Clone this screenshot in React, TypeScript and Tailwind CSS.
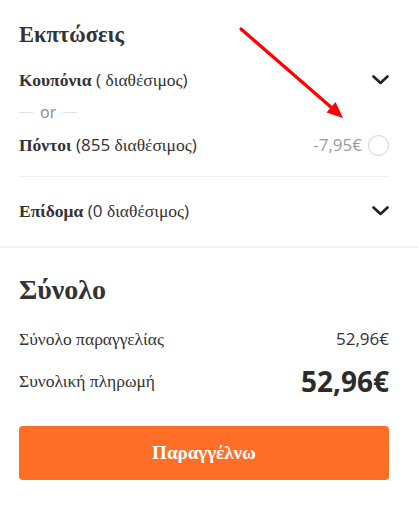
import React from 'react';

const serif = "font-['Liberation_Serif',serif]";
const sans = "font-['Open_Sans',sans-serif]";

// 결제 요약 패널의 접기 화살표
const Chevron = () => (
  <svg width="17" height="10" viewBox="0 0 17 10" fill="none">
    <polyline points="1.5,1.5 8.5,8 15.5,1.5" stroke="#222" strokeWidth="2.6" strokeLinecap="round" strokeLinejoin="round" />
  </svg>
);

const Available = ({ count }: { count?: string }) => (
  <span className="text-[#333]">
    <span className={`${sans} text-[17px]`}>(</span>
    {count ? <span className={`${sans} text-[17px]`}>{count}</span> : null}
    <span className={serif}> διαθέσιμος</span>
    <span className={`${sans} text-[17px]`}>)</span>
  </span>
);

const App: React.FC = () => {
  return (
    <div className="relative w-[418px] h-[510px] bg-white overflow-hidden text-[#333]">
      {/* 할인 섹션 */}
      <div className="pl-[19px] pr-[29px] pt-[20px]">
        <h2 className={`${serif} font-bold text-[22.5px] leading-[30px] text-[#333]`}>Εκπτώσεις</h2>

        <div className="mt-[15px] h-[30px] flex items-center justify-between text-[17.5px]">
          <div>
            <span className={`${serif} font-bold`}>Κουπόνια</span> <Available />
          </div>
          <Chevron />
        </div>

        <div className="mt-[5px] h-[24px] flex items-center gap-[7px]">
          <span className="w-[14px] h-px bg-[#e3e3e3]" />
          <span className={`${sans} text-[16px] text-[#8a8a8a] leading-none`}>or</span>
          <span className="w-[14px] h-px bg-[#e3e3e3]" />
        </div>

        <div className="mt-[6px] h-[30px] flex items-center justify-between text-[17.5px]">
          <div>
            <span className={`${serif} font-bold`}>Πόντοι</span> <Available count="855" />
          </div>
          <div className="flex items-center gap-[6px]">
            <span className={`${sans} text-[17px] text-[#9a9a9a]`}>-7,95€</span>
            <span className="w-[21px] h-[21px] rounded-full border border-[#cfcfcf]" />
          </div>
        </div>

        <div className="mt-[16px] h-px bg-[#f0f0f0]" />

        <div className="mt-[19px] h-[30px] flex items-center justify-between text-[17.5px]">
          <div>
            <span className={`${serif} font-bold`}>Επίδομα</span> <Available count="0" />
          </div>
          <Chevron />
        </div>
      </div>

      <div className="mt-[20px] h-[2px] bg-[#f2f2f2]" />

      {/* 합계 섹션 */}
      <div className="pl-[19px] pr-[29px]">
        <h2 className={`${serif} font-bold text-[28px] leading-[34px] mt-[25px] text-[#333]`}>Σύνολο</h2>

        <div className="mt-[17px] h-[30px] flex items-center justify-between">
          <span className={`${serif} text-[17.5px]`}>Σύνολο παραγγελίας</span>
          <span className={`${sans} text-[17px]`}>52,96€</span>
        </div>

        <div className="mt-[9px] h-[36px] flex items-center justify-between">
          <span className={`${serif} text-[17.5px]`}>Συνολική πληρωμή</span>
          <span className={`${sans} font-bold text-[28px] leading-none text-[#2b2b2b]`}>52,96€</span>
        </div>

        <button className={`mt-[27px] w-full h-[54px] rounded-[4px] bg-[#ff6e26] text-white ${serif} font-bold text-[19px]`}>
          Παραγγέλνω
        </button>
      </div>

      {/* 빨간 화살표 주석 */}
      <svg className="absolute left-0 top-0 pointer-events-none" width="418" height="510">
        <line x1="241" y1="29" x2="332" y2="108" stroke="#ff0000" strokeWidth="3.2" strokeLinecap="round" />
        <polygon points="343,118 326.5,112.5 335.5,102" fill="#ff0000" />
      </svg>
    </div>
  );
};

export default App;
